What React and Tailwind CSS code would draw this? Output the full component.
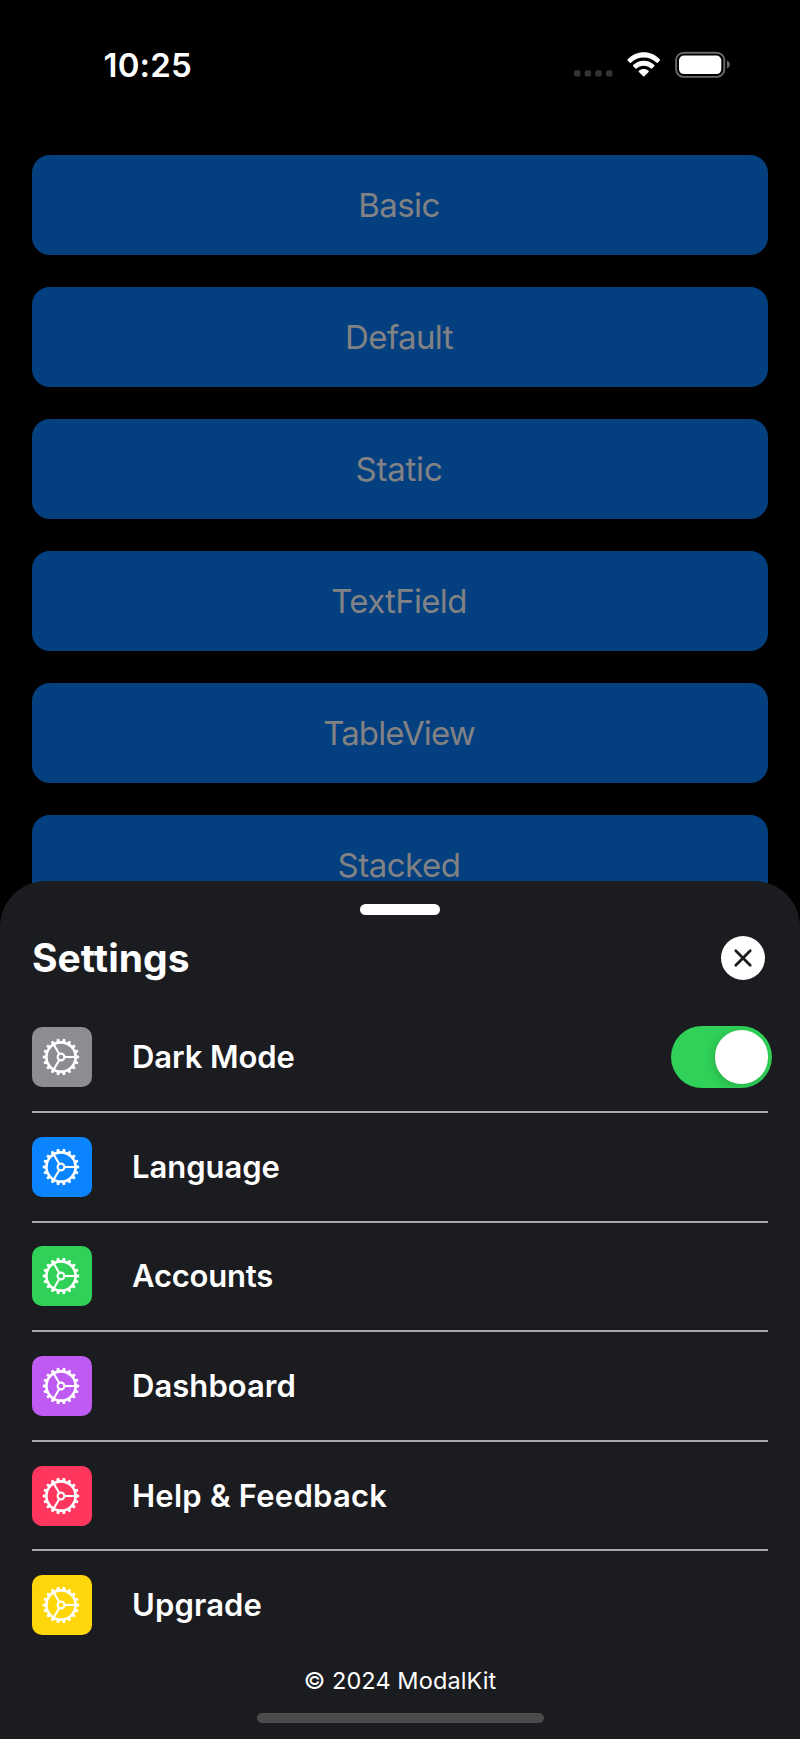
const actions = [
  { label: "Basic", tracking: "tracking-[-0.6px]" },
  { label: "Default", tracking: "tracking-[-0.6px]" },
  { label: "Static", tracking: "tracking-[-0.2px]" },
  { label: "TextField", tracking: "tracking-[-0.7px]" },
  { label: "TableView", tracking: "tracking-[-0.9px]" },
  { label: "Stacked", tracking: "tracking-[-0.5px]" },
];

const settings = [
  { label: "Dark Mode", color: "bg-[#8e8b92]", tracking: "tracking-[-0.1px]", toggle: true },
  { label: "Language", color: "bg-[#0a84ff]", tracking: "tracking-[-0.05px]" },
  { label: "Accounts", color: "bg-[#30d158]", tracking: "tracking-[-0.2px]" },
  { label: "Dashboard", color: "bg-[#bf5af2]", tracking: "tracking-[0.05px]" },
  { label: "Help & Feedback", color: "bg-[#ff375f]", tracking: "tracking-[0.25px]" },
  { label: "Upgrade", color: "bg-[#ffd60a]", tracking: "tracking-[0.15px]" },
];

const teeth = Array.from({ length: 18 }, (_, i) => i * 20);

function Gear() {
  return (
    <svg className="mr-[1.4px] size-[38px]" viewBox="-19 -19 38 38" fill="none" stroke="white">
      <circle r="14.6" strokeWidth="2.6" />
      <circle r="3.4" strokeWidth="2.1" />
      {teeth.map((a) => (
        <path key={a} d="M15 -1.8 L18.2 -1.2 V1.2 L15 1.8 Z" fill="white" stroke="none" transform={`rotate(${a})`} />
      ))}
      {[0, 120, 240].map((a) => (
        <path key={a} d="M3.8 0 H14.5" strokeWidth="2.1" transform={`rotate(${a})`} />
      ))}
    </svg>
  );
}

function StatusBar() {
  return (
    <header className="flex h-[155px] shrink-0 items-start justify-between pl-[103.5px] pr-[70px] pt-[45px]">
      <span className="text-[33px] font-semibold leading-10 tracking-[0.2px] text-white">10:25</span>
      <svg className="mt-[5px] h-[30px] w-[156px]" viewBox="574 50 156 30" fill="none">
        <g fill="#343436">
          <rect x="574" y="70.2" width="6.4" height="6.4" rx="2.2" />
          <rect x="584.7" y="70.2" width="6.4" height="6.4" rx="2.2" />
          <rect x="595.3" y="70.2" width="6.4" height="6.4" rx="2.2" />
          <rect x="606" y="70.2" width="6.4" height="6.4" rx="2.2" />
        </g>
        <g fill="white">
          <path d="M627.6 59.4 C636.5 50 651 50 659.9 59.4 Q660.4 60 659.9 60.5 L657.7 62.7 Q657.1 63.2 656.6 62.7 C649.5 55.7 638 55.7 630.9 62.7 Q630.4 63.2 629.8 62.7 L627.6 60.5 Q627.1 60 627.6 59.4 Z" />
          <path d="M633.2 65.1 C639 59.2 648.5 59.2 654.3 65.1 Q654.8 65.7 654.3 66.2 L652 68.5 Q651.4 69 650.9 68.5 C646.8 64.9 640.7 64.9 636.6 68.5 Q636.1 69 635.5 68.5 L633.2 66.2 Q632.7 65.7 633.2 65.1 Z" />
          <path d="M638.9 70.8 C641.6 68.4 645.9 68.4 648.6 70.8 Q649.2 71.4 648.6 71.9 L644.3 76.2 Q643.75 76.8 643.2 76.2 L638.9 71.9 Q638.3 71.4 638.9 70.8 Z" />
          <rect x="679" y="55.5" width="42.3" height="18.6" rx="5" />
        </g>
        <rect x="676.1" y="52.7" width="48.2" height="24.2" rx="7.6" stroke="#69696b" strokeWidth="1.9" />
        <path d="M727 60.6 C730.8 62.2 730.8 67 727 68.6 Z" fill="#69696b" />
      </svg>
    </header>
  );
}

function Toggle() {
  return (
    <span className="-mr-1 flex h-[61.5px] w-[101.5px] items-center justify-end rounded-full bg-[#30d158] pr-1">
      <span className="size-[53.5px] rounded-full bg-white shadow-[-2px_2px_8px_rgba(0,0,0,0.16)]" />
    </span>
  );
}

export default function App() {
  return (
    <div className="relative flex h-[1739px] w-[800px] flex-col overflow-hidden bg-black font-['Inter',sans-serif]">
      <StatusBar />
      <main className="flex flex-col gap-8 px-8">
        {actions.map(({ label, tracking }) => (
          <button
            key={label}
            className={`h-[100px] shrink-0 rounded-[18px] bg-[#044080] pr-0.5 pt-0.5 text-[33px] font-normal text-[#828284] ${tracking}`}
          >
            {label}
          </button>
        ))}
      </main>

      <section className="absolute inset-x-0 bottom-0 flex h-[858px] flex-col rounded-t-[46px] bg-[#1b1c20] px-8 text-white">
        <div className="mx-auto mt-[23px] h-[10.5px] w-20 shrink-0 rounded-full bg-white" />
        <div className="mt-[21.5px] flex h-11 shrink-0 items-center justify-between">
          <h1 className="text-[39px] font-bold leading-[44px] tracking-[0.05px]">Settings</h1>
          <button className="mr-[3.5px] flex size-[43.5px] items-center justify-center rounded-full bg-white">
            <svg className="size-[20px]" viewBox="-10 -10 20 20" stroke="#1b1c20" strokeWidth="2.8" strokeLinecap="round">
              <path d="M-7.2 -7.2 L7.2 7.2 M7.2 -7.2 L-7.2 7.2" />
            </svg>
          </button>
        </div>
        <ul className="mt-[23.4px] flex shrink-0 flex-col">
          {settings.map(({ label, color, tracking, toggle }) => (
            <li
              key={label}
              className="flex h-[109.6px] items-center border-b-2 border-[#a7a8aa] last:border-transparent"
            >
              <span className={`flex size-[60px] items-center justify-center rounded-[10px] ${color}`}>
                <Gear />
              </span>
              <span className={`ml-[40px] grow text-[31px] font-semibold leading-10 ${tracking}`}>{label}</span>
              {toggle && <Toggle />}
            </li>
          ))}
        </ul>
        <p className="mt-[3.6px] text-center text-[23.5px] leading-8 tracking-[0.1px]">© 2024 ModalKit</p>
        <div className="mx-auto mb-4 mt-auto h-[10px] w-[287px] shrink-0 rounded-full bg-[#4b4b4c]" />
      </section>
    </div>
  );
}
